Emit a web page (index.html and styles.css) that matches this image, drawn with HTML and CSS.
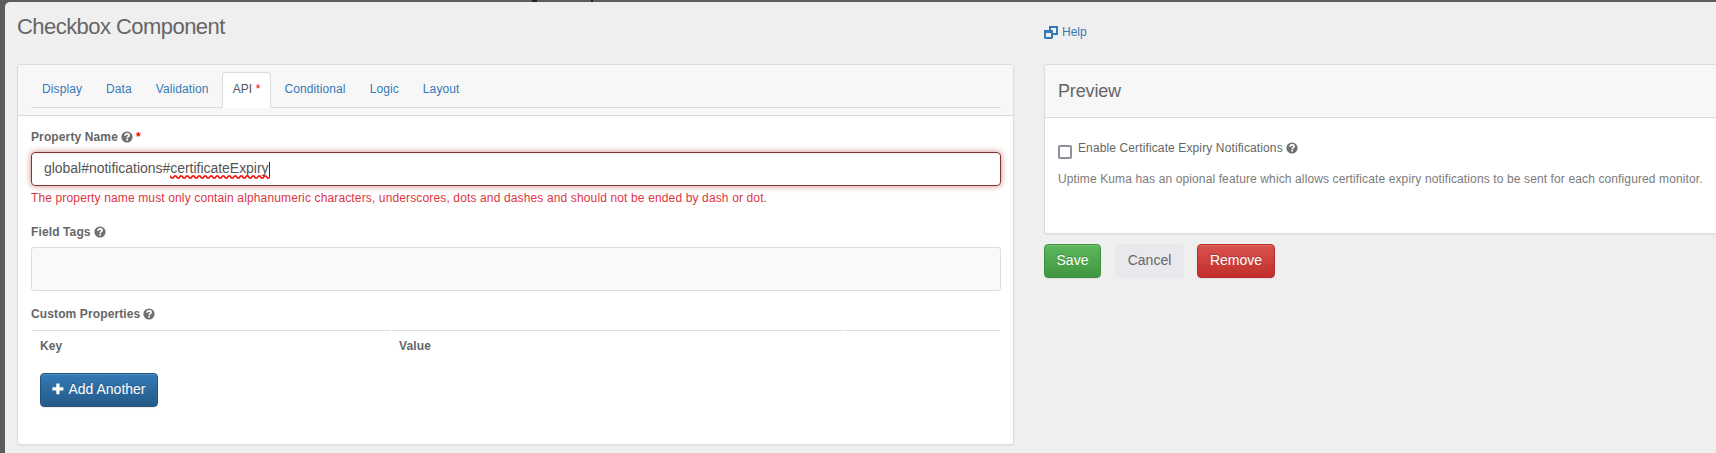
FILE: index.html
```html
<!DOCTYPE html>
<html lang="en">
<head>
<meta charset="utf-8">
<title>Checkbox Component</title>
<link rel="stylesheet" href="styles.css">
</head>
<body>
<svg class="defs" width="0" height="0">
  <symbol id="question" viewBox="0 0 12 12">
    <circle cx="6" cy="6" r="5.600" fill="currentColor"/>
    <path d="M4 4.700C4.100 3.400 5 2.900 6.100 2.900c1.200 0 2 .7 2 1.500C8.100 5.700 6.200 5.600 6.200 7.200" fill="none" stroke="#fff" stroke-width="1.600"/>
    <rect x="5.300" y="7.900" width="1.700" height="1.600" fill="#fff"/>
  </symbol>
</svg>
<div class="behind"><span class="mark mark-g"></span><span class="mark mark-p"></span></div>
<main class="dialog">
  <section class="settings">
    <h1 class="title">Checkbox Component</h1>
    <div class="card settings-card">
      <div class="tabs-head">
        <nav class="tabs">
          <a class="tab">Display</a><a class="tab">Data</a><a class="tab">Validation</a><a class="tab active">API <span class="required api-star">*</span></a><a class="tab">Conditional</a><a class="tab">Logic</a><a class="tab">Layout</a>
        </nav>
      </div>
      <div class="fields">
        <label class="label name-label"><span>Property Name</span><svg class="q"><use href="#question"/></svg><span class="required">*</span></label>
        <div class="input"><span>global#notifications#</span><span class="misspelled">certificateExpiry<svg class="wave" width="100" height="4"><defs><pattern id="wavy" width="6" height="4" patternUnits="userSpaceOnUse"><path d="M-1.500 1L0 1 1.500 3H3L4.500 1H6L7.500 3" fill="none" stroke="#f00" stroke-width="1.400"/></pattern></defs><rect width="100" height="4" fill="url(#wavy)"/></svg></span><span class="caret"></span></div>
        <p class="error">The property name must only contain alphanumeric characters, underscores, dots and dashes and should not be ended by dash or dot.</p>
        <label class="label tags-label"><span>Field Tags</span><svg class="q"><use href="#question"/></svg></label>
        <div class="tags"></div>
        <label class="label props-label"><span>Custom Properties</span><svg class="q"><use href="#question"/></svg></label>
        <div class="grid"><div>Key</div><div>Value</div><div></div></div>
        <button class="btn primary"><svg class="plus" viewBox="0 0 12 12"><path d="M4.300.5h3.200v3.800h3.900v3.200H7.500v3.800H4.300V7.500H.4V4.300h3.900z" fill="#fff"/></svg><span>Add Another</span></button>
      </div>
    </div>
  </section>
  <aside class="side">
    <a class="help"><svg width="14" height="13" viewBox="0 0 14 13"><path d="M6 4V1h7v7H9" fill="none" stroke="currentColor" stroke-width="2"/><rect x="1" y="5" width="7" height="7" rx=".4" fill="none" stroke="currentColor" stroke-width="2"/><path d="M0 4h9v3H0z" fill="currentColor"/></svg><span>Help</span></a>
    <div class="card preview">
      <h2 class="preview-title">Preview</h2>
      <div class="preview-body">
        <label class="check"><span class="box"></span><span class="check-text">Enable Certificate Expiry Notifications</span><svg class="q"><use href="#question"/></svg></label>
        <p class="desc">Uptime Kuma has an opional feature which allows certificate expiry notifications to be sent for each configured monitor.</p>
      </div>
    </div>
    <div class="actions"><button class="btn success">Save</button><button class="btn plain">Cancel</button><button class="btn danger">Remove</button></div>
  </aside>
</main>
</body>
</html>
```
FILE: styles.css
```css
* { box-sizing: border-box; }
body { margin: 0; height: 453px; overflow: hidden; background: #5c5c5c; color: #666; font: 12px/18px "Liberation Sans", Arial, sans-serif; }
h1, h2, p { margin: 0; font-weight: normal; }
.defs { position: absolute; }
.behind { height: 2px; position: relative; }
.mark { position: absolute; top: 0; height: 2px; background: #222; }
.mark-g { left: 532px; width: 5px; }
.mark-p { left: 591px; width: 2px; }
.dialog { display: flex; gap: 30px; height: 451px; margin-left: 5px; padding-left: 12px; background: #efefef; border-top-left-radius: 5px; }
.settings { width: 997px; flex: none; }
.title { height: 62px; padding-top: 12px; font-size: 22px; line-height: 26px; letter-spacing: -.55px; }
.card { border: 1px solid #dcdcdc; border-radius: 3px; background: #fff; box-shadow: 0 1px 2px rgba(0,0,0,.05); }
.settings-card { height: 381px; }
.tabs-head { height: 51px; padding: 7px 12px 0 13px; background: #f7f7f7; border-bottom: 1px solid #d9d9d9; }
.tabs { display: flex; gap: 2px; height: 36px; border-bottom: 1px solid #dcdcdc; }
.tab { height: 36px; padding: 7px 10px 0; border: 1px solid transparent; color: #337ab7; letter-spacing: .1px; white-space: nowrap; }
.tab.active { color: #555; background: #fff; border-color: #dcdcdc #dcdcdc #fff; border-radius: 4px 4px 0 0; }
.required { color: #f00; }
.fields { padding: 12px 12px 0 13px; }
.label { display: flex; align-items: center; height: 18px; font-weight: bold; letter-spacing: .12px; }
.q { width: 12px; height: 12px; margin-left: 3px; flex: none; color: #707070; }
.name-label .required { margin-left: 3px; }
.input { display: flex; height: 34px; margin-top: 6px; padding: 6px 12px; border: 1px solid #843534; border-radius: 4px; box-shadow: inset 0 1px 1px rgba(0,0,0,.075), 0 0 6px #ce8483; color: #555; font-size: 14px; line-height: 18px; letter-spacing: -.03px; }
.misspelled { position: relative; }
.wave { position: absolute; left: 0; top: 16px; }
.caret { width: 1px; height: 15px; margin-top: 3px; background: #333; }
.error { margin-top: 3px; color: #dc3545; letter-spacing: .137px; white-space: nowrap; }
.tags-label { margin-top: 16px; }
.tags { height: 44px; margin-top: 6px; border: 1px solid #dcdcdc; border-radius: 3px; background: #f9f9f9; }
.props-label { margin-top: 14px; }
.grid { display: grid; grid-template-columns: 359px 451px 156px; gap: 1px; margin: 7px 1px 0; font-weight: bold; }
.grid div { height: 43px; padding: 6px 7px; border-top: 1px solid #dcdcdc; letter-spacing: .12px; }
.grid div:first-child { padding-left: 8px; }
.btn { display: inline-flex; align-items: center; justify-content: center; height: 34px; padding: 0 0 3px; border: 1px solid; border-radius: 4px; color: #fff; font: 14px/20px "Liberation Sans", Arial, sans-serif; text-shadow: 0 -1px 0 rgba(0,0,0,.2); box-shadow: inset 0 1px 0 rgba(255,255,255,.15), 0 1px 1px rgba(0,0,0,.075); }
.primary { width: 118px; margin-left: 9px; gap: 4px; background: linear-gradient(#337ab7, #265a88); border-color: #245580; }
.plus { width: 12px; height: 12px; }
.side { flex: 1; min-width: 0; }
.help { display: flex; align-items: center; gap: 4px; height: 62px; padding-bottom: 2px; color: #337ab7; }
.help svg { margin-top: 0; }
.preview { height: 170px; border-right: 0; border-radius: 3px 0 0 3px; }
.preview-title { height: 53px; padding: 14px 13px; font-size: 18px; line-height: 24px; letter-spacing: -.15px; background: #f7f7f7; border-bottom: 1px solid #d9d9d9; }
.preview-body { padding: 21px 0 0 13px; }
.check { display: flex; align-items: center; height: 18px; }
.check-text { letter-spacing: .12px; }
.box { width: 14px; height: 14px; margin: 8px 6px 0 0; border: 2px solid #8f8f9d; border-radius: 2px; }
.desc { margin-top: 13px; color: #7b7b7b; letter-spacing: .12px; white-space: nowrap; }
.actions { display: flex; margin-top: 10px; }
.success { width: 57px; margin-right: 14px; background: linear-gradient(#5cb85c, #419641); border-color: #3e8f3e; }
.plain { width: 69px; margin-right: 13px; background: #e9e9ed; border-color: #e9e9ed; color: #666; text-shadow: none; box-shadow: none; }
.danger { width: 78px; background: linear-gradient(#d9534f, #c12e2a); border-color: #b92c28; }
```
